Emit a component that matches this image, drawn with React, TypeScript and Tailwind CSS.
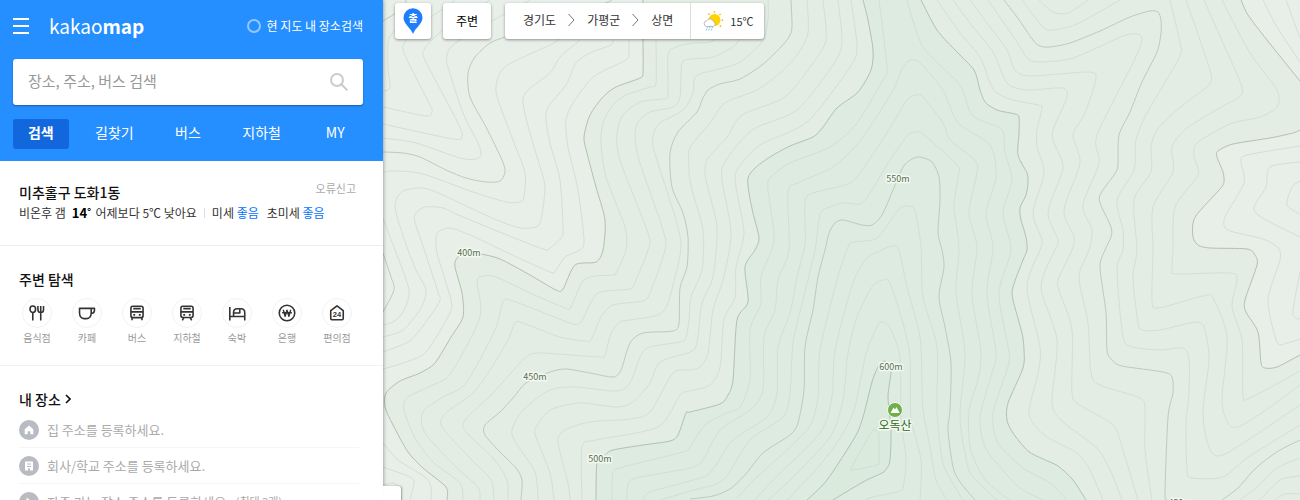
import type { ReactNode } from 'react';

type Point = [number, number];

// "x,y x,y ..." -> smooth path through every point
const curve = (line: string, closed = false) => {
  const pts = line.split(' ').map((p) => p.split(',').map(Number) as Point);
  const t = 0.13;
  let d = `M${pts[0][0]} ${pts[0][1]}`;
  for (let i = 0; i < pts.length - 1; i++) {
    const a = pts[i - 1] ?? pts[i];
    const b = pts[i];
    const c = pts[i + 1];
    const e = pts[i + 2] ?? c;
    d += `C${b[0] + (c[0] - a[0]) * t} ${b[1] + (c[1] - a[1]) * t} ${c[0] - (e[0] - b[0]) * t} ${c[1] - (e[1] - b[1]) * t} ${c[0]} ${c[1]}`;
  }
  return closed ? d + 'Z' : d;
};

const LINE_400 =
  '643,0 643,39 643,72 640,78 616,87 603,97 590,115 584,137 587,153 596,187 605,220 603,250 596,262 575,265 563,289 556,290 530,275 500,259 481,254 466,252 457,258 455,267 462,293 463,317 451,337 435,363 420,373 400,381 386,393 385,407 393,425 408,452 423,468 446,487 447,500';
const LINE_450 =
  '791,0 792,27 789,37 780,48 762,65 740,79 720,84 708,90 702,100 697,112 678,132 670,153 672,187 683,213 688,237 687,267 680,288 679,323 673,331 643,333 630,343 621,370 613,377 590,373 566,369 550,372 526,383 513,398 500,412 485,425 485,435 500,452 516,468 522,480 521,500';
const LINE_500_LEFT =
  '863,0 868,20 873,50 871,70 858,92 837,108 823,127 813,137 790,146 770,157 755,168 748,178 749,193 753,213 759,238 755,250 745,267 748,302 737,320 733,380 728,395 720,404 690,412 686,413 678,435 670,441 643,445 613,450 605,455 597,463 596,500';
const LINE_500_RIGHT =
  '1086,500 1073,480 1058,466 1043,459 1028,451 1013,433 1007,420 1008,403 1023,368 1024,350 1022,333 1013,300 1013,287 1023,260 1027,250 1026,237 1021,220 1020,208 1026,195 1028,183 1027,173 1018,155 1019,133 1019,117 1015,114 1000,111 993,108 985,102 980,90 974,70 957,52 937,30 921,0';
const LINE_600 =
  '807,500 827,480 855,437 863,417 872,382 878,367 884,361 890,366 891,373 888,397 891,430 890,460 887,468 882,473 863,482 833,500';
const LINE_EAST_TOP = '1241,0 1248,15 1267,40 1300,81';
const LINE_EAST =
  '1300,130 1293,133 1270,138 1233,144 1218,151 1217,157 1223,172 1224,182 1220,189 1198,213 1193,223 1193,237 1198,245 1210,248 1247,249 1255,255 1257,265 1245,300 1246,312 1258,332 1261,363 1265,368 1277,367 1300,355';

const STRONG = [LINE_400, LINE_500_LEFT, LINE_500_RIGHT, LINE_600, LINE_EAST_TOP, LINE_EAST];

const MEDIUM = [
  LINE_450,
  '383,21 396,13 405,6 406,0',
  '612,0 600,5 530,27 505,37 490,43 475,57 468,73 470,97 486,127 502,160 505,172 500,181 486,182 466,178 446,170 420,157 403,153 383,152',
  '383,253 391,277 394,290 383,312',
  '690,499 713,496 730,489 745,475 763,453 790,435 798,423 804,390 805,347 813,310 818,277 825,250 829,233 835,223 843,220 862,225 872,225 882,215 893,190 903,167 912,159 920,157 932,162 939,177 940,200 938,233 942,250 944,267 939,297 945,327 951,363 950,410 948,430 953,467 960,482 975,500',
  '1004,0 1017,17 1033,40 1040,46 1050,47 1070,43 1100,31 1130,17 1150,11 1158,12 1161,20 1161,33 1157,52 1142,82 1130,112 1119,135 1118,163 1116,172 1101,193 1100,203 1111,227 1111,237 1105,250 1100,267 1106,313 1107,350 1112,360 1122,366 1163,372 1172,377 1173,393 1168,417 1165,493 1167,500',
  '1300,440 1280,450 1263,462 1252,472 1238,488 1222,500',
];

const THIN = [
  // west valley
  '383,91 388,90 390,86 388,67 388,43 391,35 400,25',
  '383,107 426,116 432,112 430,105 404,53 405,42 410,35 431,17 443,9 455,0',
  '383,124 453,139 462,136 458,123 425,60 424,50 430,42 443,30 470,12 490,0',
  '383,138 416,143 460,158 476,159 481,154 478,143 463,113 448,67 447,55 451,47 463,38 490,22 530,0',
  '383,172 396,171 423,174 473,192 506,202 520,202 524,197 525,173 513,140 498,100 496,87 500,73 511,63 550,45 560,39',
  '383,218 390,237 395,250 409,290 403,312 393,322 383,325',
  '383,337 403,330 421,308 426,290 416,270 408,250 396,213 396,200 403,191 420,188 436,192 490,217 516,227 530,228 540,223 545,190 542,173 531,137 523,103 528,90 550,73 560,57 580,40',
  '383,352 411,340 433,312 440,300 438,292 425,252 415,222 416,213 425,207 443,208 463,217 540,248 550,248 561,238 563,230 560,180 550,143 546,120 548,107 566,85 576,63 590,53 611,45 613,40',
  '383,369 403,363 426,352 450,313 451,300 446,283 437,253 436,240 438,232 450,228 470,235 506,252 550,272 556,270 565,257 580,250 584,240 578,190 568,147 566,120 573,103 590,80 603,71 626,60 629,53 629,40',
  '383,443 398,460 425,477 431,487 431,500',
  '383,467 410,477 414,483 410,500',
  '383,485 393,483 400,487',
  // 400 - 450
  '656,40 656,83 650,87 626,95 613,105 603,123 601,143 606,177 625,227 626,250 616,273 613,275 585,279 571,307 565,308 530,293 496,277 483,276 477,282 480,317 451,373 433,385 408,397 404,410 415,438 433,462 460,483 463,500',
  '730,30 710,42 693,43 676,47 668,55 668,95 663,99 640,102 623,115 617,133 620,160 648,233 648,250 635,282 630,289 600,292 591,302 581,322 570,323 513,301 503,302 495,330 466,383 443,397 423,412 425,433 456,467 478,487 480,500',
  '743,35 733,47 713,57 693,59 682,63 680,97 673,107 650,112 638,122 635,137 640,163 663,230 665,250 650,293 643,301 613,305 601,317 591,340 585,341 560,337 523,323 515,323 508,340 490,370 473,393 446,413 442,427 470,458 491,480 494,500',
  '768,0 768,20 762,42 740,62 723,68 700,74 694,80 693,93 683,110 660,123 654,133 654,150 676,220 681,247 675,277 663,312 630,320 620,322 611,333 605,355 600,357 570,355 536,353 523,360 493,393 465,420 466,432 493,458 507,480 508,500',
  // 450 - 500
  '807,0 808,33 797,55 780,73 757,90 725,103 710,123 690,148 689,170 692,190 703,230 702,270 691,297 689,320 686,338 680,342 650,347 641,355 630,383 616,391 575,387 550,390 523,410 512,430 516,443 535,472 538,500',
  '823,0 826,40 813,63 785,97 742,115 727,137 707,160 706,180 717,227 713,277 702,303 697,343 690,352 660,362 650,383 633,402 616,407 580,403 550,410 536,427 536,437 550,473 554,500',
  '838,0 842,43 833,65 797,110 752,130 725,162 722,180 731,233 723,280 713,310 708,353 700,367 690,370 673,373 650,412 630,419 590,422 565,430 558,442 568,483 570,500',
  '851,0 857,47 850,67 807,122 760,145 737,170 736,187 744,233 736,267 735,297 724,320 720,367 710,385 690,391 680,395 658,427 596,440 582,447 582,500',
  // 500 - 550
  '879,0 887,67 883,80 857,123 830,147 790,163 770,178 768,190 774,240 761,277 761,303 750,330 750,380 740,407 727,413 705,425 690,447 683,452 623,467 613,473 612,500',
  '907,0 923,47 960,85 972,115 1000,128 1004,137 1005,153 1012,180 1003,213 1011,250 999,293 1009,353 1007,370 993,413 998,443 1023,468 1050,483 1067,500',
  '627,500 628,485 636,478 690,468 703,460 720,430 750,410 763,390 764,337 775,310 778,280 789,250 788,192 800,182 833,167 855,147 870,127 893,90 903,67 911,60 920,63 943,90 958,123 990,145 996,177 986,213 993,247 987,293 996,353 992,373 980,417 985,447 1000,467 1020,488 1043,500',
  '643,500 650,492 690,481 710,473 733,440 767,417 777,393 778,347 790,313 797,277 805,243 805,202 813,193 850,183 867,163 890,128 907,100 917,95 923,97 943,123 950,140 975,160 977,173 969,213 977,247 972,293 981,353 977,383 969,410 970,447 983,477 1000,493 1010,500',
  '660,500 690,491 723,480 750,440 783,417 790,393 793,343 803,300 815,250 819,220 823,210 843,203 860,204 870,193 890,160 908,135 917,132 923,134 957,165 958,177 954,207 959,247 956,293 965,353 960,417 967,463 973,477 997,500',
  // 550 - 600
  '737,498 757,477 807,430 818,397 820,350 837,280 848,247 853,242 877,238 898,210 907,206 915,211 921,247 923,297 937,347 937,410 943,463 957,490 963,500',
  '755,500 773,480 820,433 832,397 835,350 853,283 867,258 882,250 892,246 899,250 907,287 920,337 922,383 923,410 930,447 936,480 947,500',
  '768,500 790,480 830,437 843,400 848,353 857,317 872,287 883,280 890,283 903,323 910,357 911,417 921,460 920,500',
  '787,500 813,473 837,443 853,413 860,383 867,350 878,325 883,322 890,328 900,357 901,417 906,460 903,487 897,492 873,497 865,500',
  '878,432 873,430 864,445 852,467 853,470 877,465 879,460 879,436 878,432',
  // east slope
  '937,0 960,33 980,57 990,83 997,93 1013,100 1038,105 1042,108 1037,130 1037,147 1044,173 1033,213 1042,240 1040,250 1027,287 1040,347 1038,373 1029,410 1033,423 1047,437 1077,453 1090,470 1103,500',
  '953,0 973,27 993,52 1007,83 1027,90 1062,88 1067,97 1053,130 1054,143 1063,168 1048,212 1058,240 1055,250 1041,287 1057,340 1052,403 1063,422 1097,448 1110,470 1122,500',
  '970,0 990,27 1007,50 1015,70 1030,76 1087,72 1096,78 1085,113 1073,135 1080,163 1064,210 1074,237 1072,250 1058,280 1060,293 1072,330 1072,393 1080,405 1113,425 1122,447 1138,500',
  '988,0 1017,42 1027,58 1038,62 1073,58 1123,36 1137,34 1142,40 1133,63 1097,135 1099,163 1083,205 1092,230 1089,250 1079,277 1088,323 1091,373 1100,385 1140,398 1145,410 1145,450 1152,500',
  '1022,0 1043,27 1053,30 1077,24 1120,0',
  '1039,0 1053,12 1068,13 1088,0',
  '1170,0 1180,43 1179,58 1147,113 1136,140 1134,170 1117,200 1123,230 1123,250 1117,270 1123,337 1133,347 1160,350 1183,348 1189,360 1189,393 1186,423 1187,470 1192,478 1223,477 1247,458 1300,425',
  '1186,0 1210,70 1210,83 1203,90 1177,110 1157,130 1151,147 1151,172 1134,200 1137,250 1133,277 1138,323 1143,330 1160,330 1197,322 1205,330 1209,360 1203,413 1210,450 1227,453 1300,405',
  '1204,0 1223,43 1242,87 1238,98 1223,106 1187,128 1172,147 1173,172 1153,207 1153,250 1152,300 1158,308 1203,296 1213,298 1227,337 1222,400 1228,423 1238,427 1263,412 1300,385',
  '1222,0 1250,53 1277,90 1277,107 1260,117 1230,124 1197,143 1194,157 1198,175 1175,207 1173,250 1172,270 1177,274 1230,273 1237,280 1232,307 1242,340 1243,395 1250,398 1300,371',
  '1263,0 1277,27 1300,62',
  '1286,0 1300,38',
  '1300,146 1247,155 1241,162 1244,183 1225,217 1228,230 1263,239 1278,248 1280,260 1268,300 1277,342 1287,343 1300,339',
  '1300,162 1270,167 1266,187 1255,212 1300,237',
  '1300,181 1292,187 1287,205 1300,214',
  '1300,272 1293,310 1295,318 1300,319',
  '1300,458 1277,468 1257,487 1240,500',
  '1300,476 1280,480 1260,500',
  '1300,494 1285,494 1275,500',
];

const HEIGHTS = [
  { label: '400m', x: 469, y: 256 },
  { label: '450m', x: 535, y: 380 },
  { label: '500m', x: 600, y: 462 },
  { label: '550m', x: 898, y: 182 },
  { label: '600m', x: 891, y: 370 },
  { label: '450m', x: 1180, y: 506 },
];

const TABS = ['검색', '길찾기', '버스', '지하철', 'MY'];

const Glyph = ({ children }: { children: ReactNode }) => (
  <svg
    viewBox="0 0 30 30"
    className="size-[30px] rounded-full border border-[#f2f2f2] text-[#333]"
    fill="none"
    stroke="currentColor"
    strokeWidth="1.7"
    strokeLinejoin="round"
    aria-hidden="true"
  >
    {children}
  </svg>
);

const AROUND = [
  {
    name: '음식점',
    icon: (
      <>
        <ellipse cx="10.500" cy="11" rx="3" ry="3.500" />
        <path d="M10.500 14.500V23M16 7.500v4c0 2 1.300 3 3 3s3-1 3-3v-4M19 7.500V23" />
      </>
    ),
  },
  {
    name: '카페',
    icon: <path d="M7 10h12.500v5c0 4-2.500 6-5 6H12c-2.500 0-5-2-5-6zM19.500 10H23v2c0 2.200-1.500 3.300-3.800 3.300" />,
  },
  {
    name: '버스',
    icon: (
      <>
        <rect x="8.500" y="7.800" width="13" height="12.200" rx="2" />
        <path d="M8.500 13.800h13M11 10.300h8M9.700 20v2.800M20.300 20v2.800" />
        <path d="M11 17h2M17 17h2" strokeWidth="2" />
      </>
    ),
  },
  {
    name: '지하철',
    icon: (
      <>
        <rect x="8.500" y="7.800" width="13" height="12" rx="2" />
        <path d="M8.500 13.800h13M11 10.300h8M11.500 20l-1.500 3M18.500 20l1.500 3" />
        <path d="M11 17h2M17 17h2" strokeWidth="2" />
      </>
    ),
  },
  {
    name: '숙박',
    icon: (
      <>
        <path d="M7.300 8.500V23M7.300 18.800h16M23.300 23v-8.500c0-2.500-1.500-4-4-4h-4c-2.500 0-4 1.500-4 4v4.300" />
        <path d="M11.500 15h6.500v-4" />
      </>
    ),
  },
  {
    name: '은행',
    icon: (
      <>
        <circle cx="15" cy="15" r="8.300" />
        <path d="M11 11.500l2 7 2-6.500 2 6.500 2-7M9.800 14.800h10.400" strokeWidth="1.500" />
      </>
    ),
  },
  {
    name: '편의점',
    icon: (
      <>
        <path d="M8.300 12.500L15 7.300l6.700 5.200V21c0 .7-.4 1.200-1.200 1.200h-11c-.8 0-1.200-.5-1.200-1.200z" />
        <text
          x="15"
          y="19"
          textAnchor="middle"
          fontFamily="Liberation Sans, sans-serif"
          fontSize="8"
          fontWeight="700"
          fill="currentColor"
          stroke="none"
        >
          24
        </text>
      </>
    ),
  },
];

const PLACES = [
  {
    text: '집 주소를 등록하세요.',
    icon: <path d="M10 5.500l-4.300 3.800v5h3v-3h2.600v3h3v-5z" fill="#fff" />,
  },
  {
    text: '회사/학교 주소를 등록하세요.',
    icon: (
      <>
        <path d="M6 5.500h8v9h-3v-2H9v2H6z" fill="#fff" />
        <path d="M8 8h4M8 10.500h4" stroke="#b8bbc2" />
      </>
    ),
  },
  {
    text: '자주 가는 장소 주소를 등록하세요.',
    note: '(최대 3개)',
    icon: <path d="M7.500 5.500l6 4.500-6 4.500z" fill="#fff" />,
  },
];

const TopographicMap = () => (
  <svg
    viewBox="383 0 917 500"
    preserveAspectRatio="xMinYMin slice"
    className="block h-full w-full bg-[#e3ede4]"
    role="img"
    aria-label="오독산"
  >
    <rect x="383" width="917" height="500" fill="#e3ede4" />
    <path d={curve(LINE_400) + 'L383 500V0Z'} fill="#e8efe9" />
    <path d={curve(LINE_500_LEFT) + 'L1086 500' + curve(LINE_500_RIGHT).replace(/^M/, 'L') + 'Z'} fill="#deebe1" />
    <path d={curve(LINE_600, true)} fill="#daeadd" />
    <path d={curve(LINE_EAST_TOP) + 'V0Z'} fill="#e8efe9" />
    <path d={curve(LINE_EAST, true)} fill="#e8efe9" />

    <g fill="none" strokeWidth="1">
      {THIN.map((line) => (
        <path key={line} d={curve(line)} stroke="#d3dfd4" />
      ))}
      {MEDIUM.map((line) => (
        <path key={line} d={curve(line)} stroke="#bdcbbb" />
      ))}
      {STRONG.map((line) => (
        <path key={line} d={curve(line)} stroke="#b2c1b0" />
      ))}
    </g>

    <g textAnchor="middle" stroke="#f3f8f3" strokeLinejoin="round" paintOrder="stroke">
      {HEIGHTS.map((h) => (
        <text key={h.label + h.x} x={h.x} y={h.y} fontSize="9" fill="#56704b" strokeWidth="3">
          {h.label}
        </text>
      ))}
      <text x="895" y="430" fontSize="12" fill="#2f6a1a" strokeWidth="3">
        오독산
      </text>
    </g>
    <circle cx="895" cy="410" r="7.500" fill="#6fb04a" stroke="#f3f8f3" />
    <path d="M890.500 413l3-5.500 1.500 2 1.500-2.500 3.200 6z" fill="#fff" />
  </svg>
);

const Header = () => (
  <header className="bg-[#258fff] pt-3 pr-5 pb-3.5 pl-[13px] text-white">
    <div className="flex h-7 items-center">
      <button type="button" aria-label="메뉴" className="flex w-4 flex-col gap-[5px]">
        <span className="h-0.5 bg-white" />
        <span className="h-0.5 bg-white" />
        <span className="h-0.5 bg-white" />
      </button>
      <h1 className="ml-5 text-[19px] leading-7">
        <a href="#">
          kakao<b>map</b>
        </a>
      </h1>
      <label className="ml-auto flex items-center gap-1.5 text-xs">
        <input
          type="checkbox"
          className="size-3.5 appearance-none rounded-full border-2 border-white/50 checked:bg-white"
        />
        현 지도 내 장소검색
      </label>
    </div>

    <form className="mt-[19px] flex h-[46px] items-center rounded-[3px] bg-white px-[15px] shadow-[0_1px_2px_rgba(0,0,0,0.35)]">
      <input
        type="text"
        aria-label="장소, 주소, 버스 검색"
        placeholder="장소, 주소, 버스 검색"
        className="min-w-0 flex-1 pb-0.5 text-[15px] text-[#333] outline-none placeholder:text-[#999]"
      />
      <button type="button" aria-label="검색">
        <svg viewBox="0 0 18 18" className="size-[18px]" fill="none" stroke="#ccc" strokeWidth="2" aria-hidden="true">
          <circle cx="7" cy="7" r="6" />
          <path d="M11.300 11.300l6 6" />
        </svg>
      </button>
    </form>

    <nav className="mt-3.5 -mb-0.5 grid grid-cols-5 gap-[18px]">
      {TABS.map((tab, i) => (
        <a
          key={tab}
          href="#"
          className={
            i === 0
              ? 'rounded-[3px] bg-[#1267dd] pb-1 text-center text-sm leading-[26px] font-bold'
              : 'pb-1 text-center text-sm leading-[26px]'
          }
        >
          {tab}
        </a>
      ))}
    </nav>
  </header>
);

const Weather = () => (
  <section className="flex items-start justify-between border-b border-[#ededed] pt-[21px] pr-[27px] pb-[21px] pl-[19px]">
    <div>
      <h2 className="text-sm leading-5 font-medium text-[#111]">미추홀구 도화1동</h2>
      <p className="flex items-center leading-[22px] whitespace-nowrap">
        <span>비온후 갬</span>
        <b className="ml-1.5 text-[13px] text-black">14˚</b>
        <span className="ml-1">어제보다 5℃ 낮아요</span>
        <span className="mx-[7px] h-2.5 w-px bg-[#ddd]" />
        <span>
          미세 <span className="text-[#0073ff]">좋음</span>
        </span>
        <span className="ml-2">
          초미세 <span className="text-[#0073ff]">좋음</span>
        </span>
      </p>
    </div>
    <a href="#" className="-ml-10 text-[11px] leading-3 text-[#aaa]">
      오류신고
    </a>
  </section>
);

const Around = () => (
  <section className="border-b border-[#f2f2f2] pt-[23px] pb-[17px]">
    <h2 className="pl-[19px] text-sm leading-5 font-medium text-[#111]">주변 탐색</h2>
    <ul className="mt-[9px] flex pl-3">
      {AROUND.map((a) => (
        <li key={a.name} className="w-[50px]">
          <a href="#" className="flex flex-col items-center text-[10px] leading-5 text-[#999]">
            <Glyph>{a.icon}</Glyph>
            {a.name}
          </a>
        </li>
      ))}
    </ul>
  </section>
);

const MyPlaces = () => (
  <section className="pt-[23px] pr-6 pl-[19px]">
    <h2 className="text-sm leading-5 font-medium text-[#111]">
      <a href="#" className="flex items-center gap-1">
        내 장소
        <svg viewBox="0 0 6 10" className="h-2.5 w-1.5" fill="none" stroke="currentColor" strokeWidth="1.600" aria-hidden="true">
          <path d="M1 1l4 4-4 4" />
        </svg>
      </a>
    </h2>
    <ul className="mt-[3px]">
      {PLACES.map((p) => (
        <li key={p.text} className="border-b border-[#f5f5f5]">
          <a href="#" className="flex h-[35px] items-center text-[13px] text-[#aaa]">
            <svg viewBox="0 0 20 20" className="mr-2 size-5 rounded-full bg-[#b8bbc2]" aria-hidden="true">
              {p.icon}
            </svg>
            {p.text}
            {p.note && <span className="ml-1.5 text-[11px]">{p.note}</span>}
          </a>
        </li>
      ))}
    </ul>
  </section>
);

const Chevron = () => (
  <svg viewBox="0 0 7 14" className="mx-3 h-3.5 w-[7px]" fill="none" stroke="#777" aria-hidden="true">
    <path d="M.5 1l5.500 6-5.500 6" />
  </svg>
);

// floating controls above the map
const MapBar = () => (
  <div className="absolute top-[3px] left-3 flex h-9 items-stretch gap-3 text-xs text-[#333]">
    <button type="button" aria-label="출발" className="w-9 rounded-[3px] bg-white shadow-[0_1px_3px_rgba(0,0,0,0.4)]">
      <svg viewBox="0 0 20 26" className="mx-auto h-[26px] w-5" aria-hidden="true">
        <path d="M10 26C8 20 .5 16 .5 9.700a9.500 9.500 0 0 1 19 0C19.500 16 12 20 10 26z" fill="#1e7dfa" />
        <text x="10" y="13.500" textAnchor="middle" fontSize="10" fontWeight="700" fill="#fff">
          출
        </text>
      </svg>
    </button>
    <button type="button" className="w-12 rounded-[3px] bg-white text-black shadow-[0_1px_3px_rgba(0,0,0,0.4)]">
      주변
    </button>
    <div className="ml-0.5 flex rounded-[3px] bg-white shadow-[0_1px_3px_rgba(0,0,0,0.4)]">
      <nav className="flex items-center pr-[17px] pb-0.5 pl-[18px]">
        <a href="#">경기도</a>
        <Chevron />
        <a href="#">가평군</a>
        <Chevron />
        <a href="#">상면</a>
      </nav>
      <p className="flex items-center gap-1.5 border-l border-[#ddd] pr-2.5 pl-3 text-[11px]">
        <svg viewBox="0 0 21 21" className="size-[21px]" aria-hidden="true">
          <circle cx="11.500" cy="9" r="6" fill="#ffd200" />
          <path
            d="M11.500 .3v1.500M5.500 2.500l1 1.200M17.600 3l-1.200 1M18.600 9.300h1.600M16.800 14.500l1.200 1.200"
            stroke="#ffb700"
            strokeWidth="1.500"
          />
          <path
            d="M3.500 15.500a3 3 0 0 1 .3-5.900 3.800 3.800 0 0 1 6.800 1 2.600 2.600 0 0 1-.4 4.900z"
            fill="#fff"
            stroke="#aaa"
            strokeWidth=".8"
          />
          <path d="M4.500 16l-1.500 4M7 16l-1.500 4M9.500 16L8 20" stroke="#7ccbf5" strokeDasharray="1.500 .7" />
        </svg>
        15℃
      </p>
    </div>
  </div>
);

const App = () => {
  return (
    <div className="flex h-screen overflow-hidden bg-white font-['Noto_Sans_CJK_KR','Liberation_Sans',sans-serif] text-xs text-[#333]">
      <aside className="relative z-10 w-[383px] shrink-0 bg-white shadow-[0_0_4px_rgba(0,0,0,0.45)]">
        <Header />
        <Weather />
        <Around />
        <MyPlaces />
        {/* handle that folds the side panel */}
        <button
          type="button"
          aria-label="패널 접기"
          className="absolute top-[486px] left-full h-12 w-[18px] rounded-r-[3px] bg-white shadow-[1px_0_2px_rgba(0,0,0,0.35)]"
        />
      </aside>
      <main className="relative min-w-0 flex-1">
        <TopographicMap />
        <MapBar />
      </main>
    </div>
  );
};

export default App;
